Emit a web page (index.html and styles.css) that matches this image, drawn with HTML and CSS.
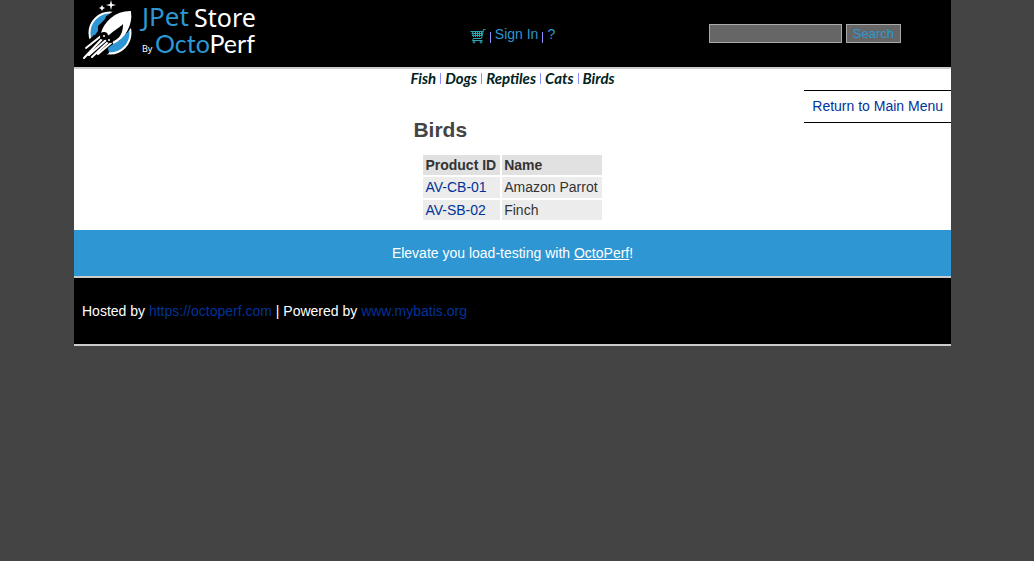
FILE: index.html
```html
<!DOCTYPE html>
<html lang="en">
<head>
<meta charset="utf-8">
<title>JPetStore Demo</title>
<meta name="viewport" content="width=device-width, initial-scale=1">
<link rel="stylesheet" href="styles.css">
</head>
<body>
<div class="page">
  <header class="header">
    <a class="logo" href="#" aria-label="JPetStore by OctoPerf">
      <svg class="logo-art" viewBox="0 0 184 66" width="184" height="66" aria-hidden="true">
        <circle cx="30" cy="33" r="20.500" fill="#2d96d3" stroke="#fff" stroke-width="2"/>
        <path d="M4 44L13 36L17 31L17 26L22 22L25 17L38 8L54 9L54 24L47 33L43 34L40 40L33 44L28 48L29 53L18 60H0Z" fill="#000"/>
        <path d="M11 35C11 26 17 17 27 14L25 19L21 23L18 26L18 31L15 35Z" fill="#2d96d3"/>
        <path d="M29 49L34 46L41 42L43 38L49 34C47 44 39 51 29 51Z" fill="#2d96d3"/>
        <path d="M22 33C25 23 35 12 50 12C52 25 44 38 33 43L29 36Z" fill="#fff"/>
        <path d="M43 24C39 28 36 29 29 35L34 41C40 38 43 33 43 24Z" fill="#000"/>
        <path d="M22 33C25 23 35 12 50 12C52 25 44 38 33 43" fill="none" stroke="#fff" stroke-width="2"/>
        <path d="M21 36L6 48M23 38L4 58M26 40L9 55M28 42L12 57M31 43L18 54" stroke="#fff" stroke-width="2" stroke-linecap="round"/>
        <circle cx="24" cy="36" r="4" fill="#000"/>
        <circle cx="30" cy="39" r="4" fill="#000"/>
        <circle cx="24" cy="36" r="1" fill="#fff"/>
        <circle cx="29" cy="40" r="1" fill="#fff"/>
        <path d="M31 0L32 4L36 5L32 6L31 10L30 6L26 5L30 4ZM22 5L23 7L25 8L23 9L22 11L21 9L19 8L21 7Z" fill="#fff"/>
        <text class="logo-pet" x="62" y="26">JPet</text>
        <text class="logo-store" x="114" y="27">Store</text>
        <text class="logo-by" x="62" y="52">By</text>
        <text class="logo-octo" x="75" y="53">Octo<tspan class="logo-perf">Perf</tspan></text>
      </svg>
    </a>
    <nav class="account" aria-label="Account">
      <a href="#" aria-label="Cart"><svg class="cart" viewBox="0 0 16 16" width="16" height="16" fill="none" stroke="#29a4b5"><path d="M15.500 1.500H13.500L11.500 10.500H3.500M.500 3.500H13M1.500 5.500H12.500M2 7.500H12M3.500 9L2.500 3.500M5.500 3V9M7.500 3V9M9.500 3V9M11.500 3V8M3.500 10.500L2.500 12.500H12.500"/><circle cx="4" cy="14" r="1"/><circle cx="11" cy="14" r="1"/></svg></a>
      <span class="divider"></span>
      <a href="#">Sign In</a>
      <span class="divider"></span>
      <a href="#">?</a>
    </nav>
    <form class="search">
      <input class="search-field" type="text" name="keyword" aria-label="Search products">
      <button class="search-button" type="submit">Search</button>
    </form>
  </header>
  <nav class="categories" aria-label="Categories">
    <a href="#">Fish</a>
    <a href="#">Dogs</a>
    <a href="#">Reptiles</a>
    <a href="#">Cats</a>
    <a href="#">Birds</a>
  </nav>
  <main class="content">
    <section class="catalog">
      <h2 class="title">Birds</h2>
      <table class="products">
        <thead><tr><th scope="col">Product ID</th><th scope="col">Name</th></tr></thead>
        <tbody>
          <tr><td><a href="#">AV-CB-01</a></td><td>Amazon Parrot</td></tr>
          <tr><td><a href="#">AV-SB-02</a></td><td>Finch</td></tr>
        </tbody>
      </table>
    </section>
    <div class="back"><a href="#">Return to Main Menu</a></div>
  </main>
  <div class="banner">Elevate you load-testing with <a href="#">OctoPerf</a>!</div>
  <footer class="footer">Hosted by <a href="#">https://octoperf.com</a> | Powered by <a href="#">www.mybatis.org</a></footer>
</div>
</body>
</html>
```
FILE: styles.css
```css
* { box-sizing: border-box; }

body {
  margin: 0;
  padding: 0 83px 0 74px;
  background: #444;
  color: #333;
  font: 14px/16px "Liberation Sans", Arial, sans-serif;
}

a { color: #039; text-decoration: none; }

.page { background: #fff; }

.header {
  display: grid;
  grid-template-columns: 1fr auto 1fr;
  align-items: center;
  height: 69px;
  background: #000;
  border-bottom: 2px solid #ccc;
}

.logo { padding-left: 6px; align-self: start; }
.logo-art { display: block; overflow: visible; }
.logo-art text { fill: #fff; }
.logo-art .logo-pet { font: 26px/26px "Noto Sans", sans-serif; fill: #2d96d3; }
.logo-art .logo-store { font: 25px/25px "Noto Sans", sans-serif; }
.logo-art .logo-by { font: 9px/9px "Noto Sans", sans-serif; }
.logo-art .logo-octo { font: 25px/25px Lato, sans-serif; fill: #2d96d3; }
.logo-art .logo-perf { fill: #fff; }

.account { display: flex; gap: 4px; align-items: center; }
.account a { color: #2d96d3; }
.cart { display: block; margin-top: 4px; }
.divider { width: 1px; height: 11px; margin-top: 8px; background: #8c8cff; }

.search { display: flex; gap: 4px; justify-content: flex-end; padding-right: 50px; }
.search-field,
.search-button {
  height: 19px;
  margin: 0;
  padding: 0 6px;
  border: 1px solid #aaa;
  border-radius: 0;
  background: #666;
  color: #2d96d3;
  font: 13px/16px "Liberation Sans", Arial, sans-serif;
}
.search-field { width: 133px; }

.categories { display: flex; justify-content: center; height: 18px; }
.categories a {
  padding: 0 4px;
  color: #022;
  font: italic 700 15px/18px Lato, sans-serif;
}
.categories a + a {
  padding-left: 5px;
  background: linear-gradient(#8c8cff, #8c8cff) left center / 1px 11px no-repeat;
}

.content {
  display: grid;
  grid-template-columns: 1fr auto 1fr;
  padding: 3px 0 8px;
}
.catalog { grid-column: 2; padding-top: 27px; }
.title { margin: 0 0 11px; color: #444; font-size: 21px; line-height: 25px; }
.products { margin: 0 8px; border-spacing: 2px; }
.products th,
.products td { padding: 2px 4px 2px 2px; text-align: left; background: #ececec; }
.products th { background: #e1e1e1; }
.products tbody tr:first-child td { padding-bottom: 3px; }

.back {
  grid-column: 3;
  justify-self: end;
  align-self: start;
  padding: 7px 8px 8px;
  border: solid #000;
  border-width: 1px 0;
}

.banner { padding: 15px 8px; background: #2d96d3; color: #fff; text-align: center; }
.banner a { color: #fff; text-decoration: underline; }

.footer {
  padding: 25px 8px;
  border: solid #ccc;
  border-width: 2px 0;
  background: #000;
  color: #fff;
}
```
